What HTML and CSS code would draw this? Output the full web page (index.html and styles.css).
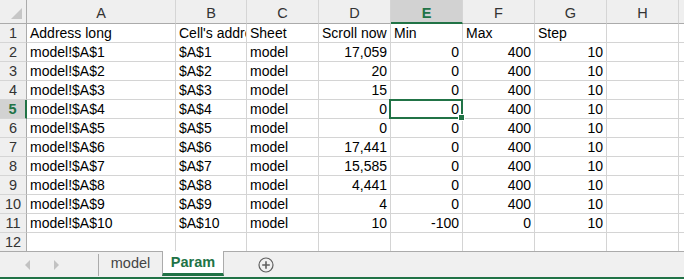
FILE: index.html
```html
<!DOCTYPE html>
<html lang="en">
<head>
    <meta charset="UTF-8">
    <title>Param</title>
    <link rel="stylesheet" href="styles.css">
</head>
<body>
    <div class="sheet">
        <div class="hd corner"><span class="tri"></span></div>
        <div class="hd">A</div><div class="hd">B</div><div class="hd">C</div><div class="hd">D</div>
        <div class="hd sel-col">E</div><div class="hd">F</div><div class="hd">G</div><div class="hd">H</div><div class="hd"></div>

        <div class="rh">1</div>
        <div class="c">Address long</div><div class="c">Cell's address</div><div class="c">Sheet</div><div class="c">Scroll now</div>
        <div class="c">Min</div><div class="c">Max</div><div class="c">Step</div><div class="c"></div><div class="c"></div>

        <div class="rh">2</div>
        <div class="c">model!$A$1</div><div class="c">$A$1</div><div class="c">model</div><div class="c n">17,059</div>
        <div class="c n">0</div><div class="c n">400</div><div class="c n">10</div><div class="c"></div><div class="c"></div>

        <div class="rh">3</div>
        <div class="c">model!$A$2</div><div class="c">$A$2</div><div class="c">model</div><div class="c n">20</div>
        <div class="c n">0</div><div class="c n">400</div><div class="c n">10</div><div class="c"></div><div class="c"></div>

        <div class="rh">4</div>
        <div class="c">model!$A$3</div><div class="c">$A$3</div><div class="c">model</div><div class="c n">15</div>
        <div class="c n">0</div><div class="c n">400</div><div class="c n">10</div><div class="c"></div><div class="c"></div>

        <div class="rh sel-row">5</div>
        <div class="c">model!$A$4</div><div class="c">$A$4</div><div class="c">model</div><div class="c n">0</div>
        <div class="c n active">0<span class="handle"></span></div><div class="c n">400</div><div class="c n">10</div><div class="c"></div><div class="c"></div>

        <div class="rh">6</div>
        <div class="c">model!$A$5</div><div class="c">$A$5</div><div class="c">model</div><div class="c n">0</div>
        <div class="c n">0</div><div class="c n">400</div><div class="c n">10</div><div class="c"></div><div class="c"></div>

        <div class="rh">7</div>
        <div class="c">model!$A$6</div><div class="c">$A$6</div><div class="c">model</div><div class="c n">17,441</div>
        <div class="c n">0</div><div class="c n">400</div><div class="c n">10</div><div class="c"></div><div class="c"></div>

        <div class="rh">8</div>
        <div class="c">model!$A$7</div><div class="c">$A$7</div><div class="c">model</div><div class="c n">15,585</div>
        <div class="c n">0</div><div class="c n">400</div><div class="c n">10</div><div class="c"></div><div class="c"></div>

        <div class="rh">9</div>
        <div class="c">model!$A$8</div><div class="c">$A$8</div><div class="c">model</div><div class="c n">4,441</div>
        <div class="c n">0</div><div class="c n">400</div><div class="c n">10</div><div class="c"></div><div class="c"></div>

        <div class="rh">10</div>
        <div class="c">model!$A$9</div><div class="c">$A$9</div><div class="c">model</div><div class="c n">4</div>
        <div class="c n">0</div><div class="c n">400</div><div class="c n">10</div><div class="c"></div><div class="c"></div>

        <div class="rh">11</div>
        <div class="c">model!$A$10</div><div class="c">$A$10</div><div class="c">model</div><div class="c n">10</div>
        <div class="c n">-100</div><div class="c n">0</div><div class="c n">10</div><div class="c"></div><div class="c"></div>

        <div class="rh last">12</div>
        <div class="c last"></div><div class="c last"></div><div class="c last"></div><div class="c last"></div>
        <div class="c last"></div><div class="c last"></div><div class="c last"></div><div class="c last"></div><div class="c last"></div>
    </div>

    <div class="tabbar">
        <div class="nav">
            <span class="arrow left"></span>
            <span class="arrow right"></span>
        </div>
        <div class="tab">model</div>
        <div class="tab current">Param</div>
        <div class="add">
            <svg width="16" height="16" viewBox="0 0 16 16">
                <circle cx="8" cy="8" r="7" fill="none" stroke="#5f5f5f" stroke-width="1.2"/>
                <path d="M8 4.2v7.6M4.2 8h7.6" stroke="#5f5f5f" stroke-width="1.6"/>
            </svg>
        </div>
    </div>
</body>
</html>
```

FILE: styles.css
```css
body { margin: 0; width: 684px; height: 279px; overflow: hidden; background: #fff;
       font-family: "Liberation Sans", Arial, sans-serif; font-size: 14px; color: #000; }

.sheet { display: grid; grid-template-columns: 27px 149px 71px 72px 72px 72px 72px 72px 72px 1fr;
         grid-template-rows: 24px repeat(11, 19px) 18px; }

.hd { box-sizing: border-box; background: #efefef; border-right: 1px solid #d5d5d5; border-bottom: 1px solid #ababab;
      text-align: center; line-height: 19px; padding-top: 4px; color: #333; font-size: 14.5px; }
.corner { position: relative; border-right-color: #ababab; }
.tri { position: absolute; right: 4px; bottom: 4px; width: 0; height: 0;
       border-left: 11px solid transparent; border-bottom: 11px solid #c6c6c6; }
.sel-col { background: #d2d2d2; color: #217346; font-weight: bold; border-bottom: 2px solid #217346; }

.rh { box-sizing: border-box; background: #efefef; border-right: 1px solid #ababab; border-bottom: 1px solid #d5d5d5;
      text-align: center; line-height: 18px; color: #333; font-size: 14.5px; }
.sel-row { background: #d2d2d2; color: #217346; font-weight: bold; border-right: 2px solid #217346; }

.c { box-sizing: border-box; border-right: 1px solid #d4d4d4; border-bottom: 1px solid #d4d4d4;
     line-height: 18px; padding: 0 3px; white-space: nowrap; overflow: hidden; }
.n { text-align: right; }
.last { border-bottom: none; }

.active { position: relative; overflow: visible; }
.active::after { content: ""; position: absolute; left: -2px; top: -1px; right: -1px; bottom: -1px;
                 border: 2px solid #217346; }
.handle { position: absolute; right: -3px; bottom: -3px; width: 5px; height: 5px; background: #217346;
          border: 1px solid #fff; z-index: 1; }

.tabbar { display: flex; height: 25px; background: #f0f0f0; border-top: 1px solid #ababab;
          border-bottom: 2px solid #217346; font-size: 14.5px; }
.nav { width: 98px; display: flex; align-items: center; gap: 24px; padding-left: 25px; box-sizing: border-box; }
.arrow { width: 0; height: 0; border-top: 5px solid transparent; border-bottom: 5px solid transparent; }
.arrow.left { border-right: 5px solid #c2c2c2; }
.arrow.right { border-left: 5px solid #c2c2c2; }
.tab { box-sizing: border-box; height: 22px; margin-top: 2px; padding-top: 1px; border-left: 1px solid #ababab;
       width: 64px; text-align: center; color: #444; }
.tab.current { width: 62px; height: 25px; margin-top: -1px; padding-top: 3px; background: #fff; color: #217346;
               font-weight: bold; border-right: 1px solid #ababab; border-bottom: 3px solid #217346; }
.add { width: 84px; display: flex; justify-content: center; align-items: center; }
```
